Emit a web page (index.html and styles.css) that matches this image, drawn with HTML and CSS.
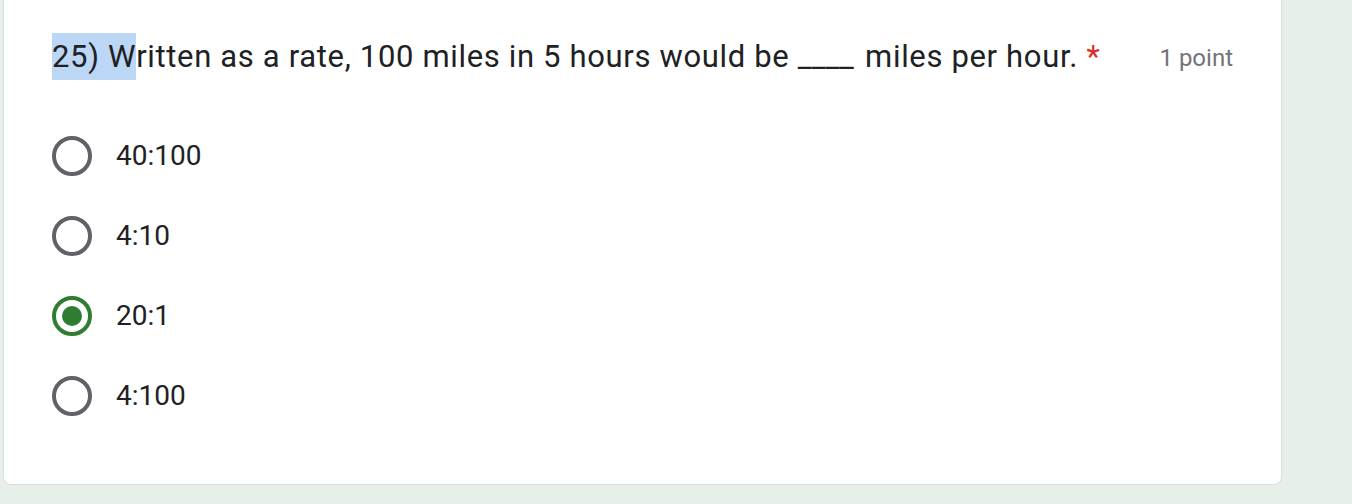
FILE: index.html
```html
<!DOCTYPE html>
<html>
<head>
<meta charset="utf-8">
<link rel="stylesheet" href="styles.css">
</head>
<body>
<div class="card">
  <div class="question-row">
    <div class="question"><span class="sel">25) W</span>ritten as a rate, 100 miles in 5 hours would be <span class="blank">____</span> miles per hour. <span class="req">*</span></div>
    <div class="points">1 point</div>
  </div>
  <div class="options">
    <div class="option"><span class="radio"></span><span class="label">40:100</span></div>
    <div class="option"><span class="radio"></span><span class="label">4:10</span></div>
    <div class="option"><span class="radio checked"></span><span class="label">20:1</span></div>
    <div class="option"><span class="radio"></span><span class="label">4:100</span></div>
  </div>
</div>
</body>
</html>
```
FILE: styles.css
```css
html, body {
  margin: 0;
  padding: 0;
}
body {
  background: #e7efe9;
  font-family: Roboto, "Noto Sans", sans-serif;
  color: #202124;
  height: 504px;
  overflow: hidden;
}
.card {
  box-sizing: border-box;
  width: 1279px;
  margin-left: 3px;
  margin-top: -24px;
  background: #fff;
  border: 1px solid #dadce0;
  border-radius: 8px;
  padding: 56px 48px 48px 48px;
}
.question-row {
  display: flex;
  justify-content: space-between;
  align-items: center;
}
.question {
  font-size: 31px;
  line-height: 47px;
  letter-spacing: 0.66px;
}
.sel {
  background: #bcd6f6;
  display: inline-block;
}
.blank {
  letter-spacing: 0;
  margin-right: 3px;
}
.req {
  color: #d93025;
}
.points {
  font-size: 24px;
  color: #70757a;
  padding-top: 3px;
}
.options {
  margin-top: 36px;
  display: flex;
  flex-direction: column;
}
.option {
  height: 80px;
  display: flex;
  align-items: center;
  gap: 24px;
}
.radio {
  box-sizing: border-box;
  width: 40px;
  height: 40px;
  border: 4px solid #5f6368;
  border-radius: 50%;
  display: flex;
  align-items: center;
  justify-content: center;
}
.radio.checked {
  border-color: #2e7d32;
}
.radio.checked::after {
  content: "";
  width: 20px;
  height: 20px;
  border-radius: 50%;
  background: #2e7d32;
}
.label {
  font-size: 28px;
  margin-top: -2px;
}
```
